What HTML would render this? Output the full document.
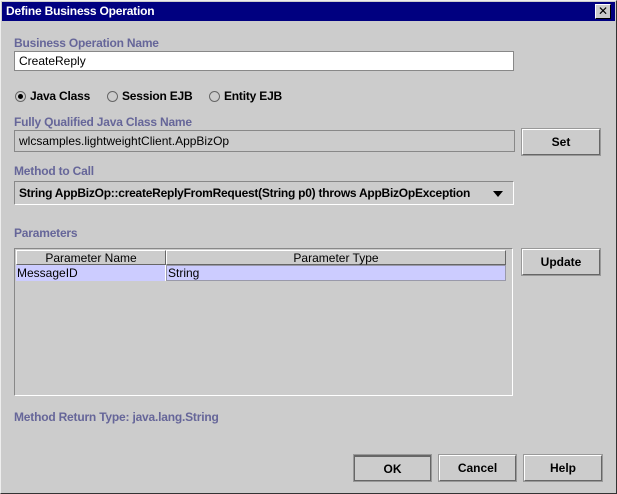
<!DOCTYPE html><html><head><style>
body{margin:0;width:617px;height:494px;background:#ccc;font-family:"Liberation Sans",sans-serif;position:relative;overflow:hidden}
.a{position:absolute}
.win{left:0;top:0;width:615px;height:492px;border:1px solid;border-color:#eee #333 #333 #eee}
.title{left:2px;top:2px;width:613px;height:19px;background:#000080;color:#fff;font-weight:bold;font-size:12px;line-height:19px;text-indent:4px;letter-spacing:-0.2px}
.x{left:595px;top:4px;width:14px;height:13px;background:#ccc;border:1px solid;border-color:#fff #000 #000 #fff;font-size:12px;line-height:12px;text-align:center;color:#000}
.lbl{color:#666699;font-weight:bold;font-size:12px;letter-spacing:-0.2px}
.tf{background:#fff;border:1px solid #888;font-size:12px;line-height:19px;text-indent:4px;box-sizing:border-box}
.btn{border:1px solid;border-color:#fff #666 #666 #fff;outline:1px solid #999;font-weight:bold;font-size:12px;text-align:center;box-sizing:border-box;color:#000}
.r{font-weight:bold;font-size:12px;color:#000;letter-spacing:-0.2px}
.rb{display:inline-block;width:11px;height:11px;border-radius:50%;border:1px solid #666;background:#ccc;vertical-align:-2px;margin-right:4px;box-sizing:border-box;position:relative}
</style></head><body>
<div class="a win"></div>
<div class="a title">Define Business Operation</div>
<div class="a x">✕</div>
<div class="a lbl" style="left:14px;top:36px">Business Operation Name</div>
<div class="a tf" style="left:14px;top:51px;width:500px;height:20px">CreateReply</div>
<div class="a r" style="left:15px;top:89px"><span class="rb"><span class="a" style="left:2px;top:2px;width:5px;height:5px;border-radius:50%;background:#000"></span></span>Java Class</div>
<div class="a r" style="left:107px;top:89px"><span class="rb"></span>Session EJB</div>
<div class="a r" style="left:209px;top:89px"><span class="rb"></span>Entity EJB</div>
<div class="a lbl" style="left:14px;top:115px">Fully Qualified Java Class Name</div>
<div class="a tf" style="left:14px;top:130px;width:501px;height:22px;background:#ccc;line-height:21px;border-color:#888">wlcsamples.lightweightClient.AppBizOp</div>
<div class="a btn" style="left:522px;top:129px;width:78px;height:26px;line-height:24px">Set</div>
<div class="a lbl" style="left:14px;top:164px">Method to Call</div>
<div class="a tf" style="left:14px;top:181px;width:500px;height:24px;background:#ccc;border-color:#888 #fff #fff #888;font-weight:bold;line-height:22px;letter-spacing:-0.25px;text-indent:4px">String AppBizOp::createReplyFromRequest(String p0) throws AppBizOpException<span class="a" style="right:10px;top:9px;width:0;height:0;border-left:5px solid transparent;border-right:5px solid transparent;border-top:6px solid #000"></span></div>
<div class="a lbl" style="left:14px;top:226px">Parameters</div>
<div class="a" style="left:14px;top:248px;width:499px;height:148px;border:1px solid;border-color:#888 #fff #fff #888;box-sizing:border-box"></div>
<div class="a" style="left:16px;top:250px;width:150px;height:15px;border:1px solid;border-color:#fff #666 #666 #fff;box-sizing:border-box;font-size:12px;text-align:center;line-height:14px">Parameter Name</div>
<div class="a" style="left:166px;top:250px;width:340px;height:15px;border:1px solid;border-color:#fff #666 #666 #fff;box-sizing:border-box;font-size:12px;text-align:center;line-height:14px">Parameter Type</div>
<div class="a" style="left:16px;top:265px;width:150px;height:16px;background:#ccccff;font-size:12px;line-height:16px;text-indent:1px;box-sizing:border-box;border-right:1px solid #fff">MessageID</div>
<div class="a" style="left:166px;top:265px;width:340px;height:16px;background:#ccccff;font-size:12px;line-height:15px;text-indent:1px;border:1px solid #99a;box-sizing:border-box">String</div>
<div class="a btn" style="left:522px;top:249px;width:78px;height:26px;line-height:24px">Update</div>
<div class="a lbl" style="left:14px;top:410px">Method Return Type: java.lang.String</div>
<div class="a btn" style="left:354px;top:455px;width:77px;height:26px;line-height:24px;border-color:#666;border-width:2px 1px 1px 1px">OK</div>
<div class="a btn" style="left:439px;top:455px;width:77px;height:26px;line-height:24px">Cancel</div>
<div class="a btn" style="left:524px;top:455px;width:78px;height:26px;line-height:24px">Help</div>
</body></html>
